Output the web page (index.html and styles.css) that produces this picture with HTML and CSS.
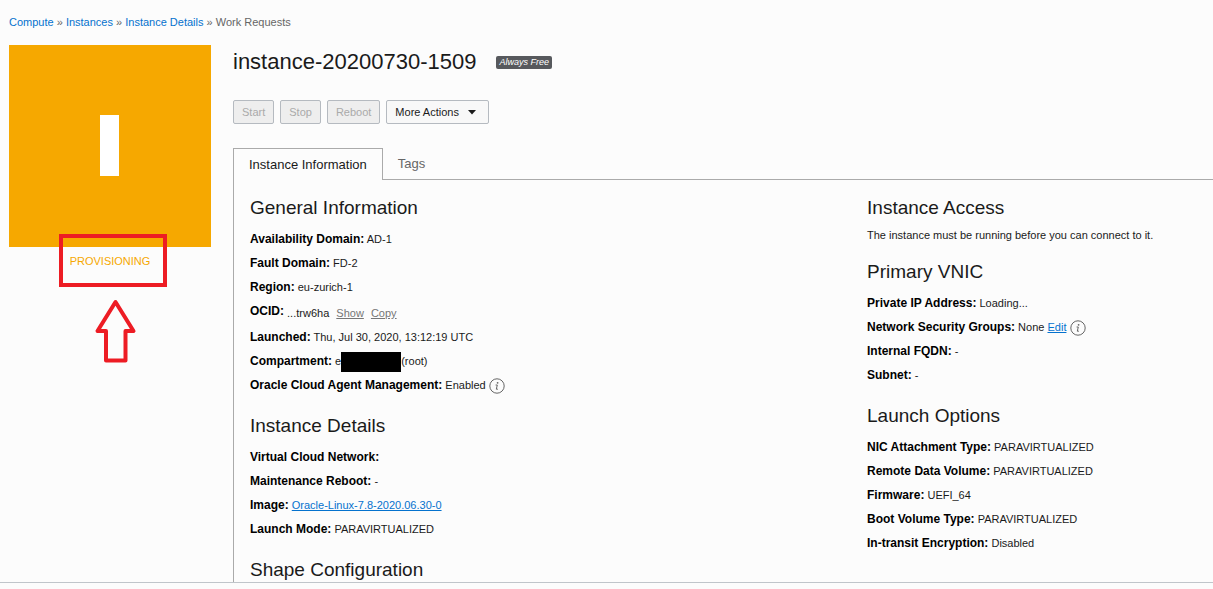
FILE: index.html
```html
<!DOCTYPE html>
<html lang="en">
<head>
<meta charset="utf-8">
<meta name="viewport" content="width=device-width, initial-scale=1">
<title>Instance Details</title>
<link rel="stylesheet" href="styles.css">
</head>
<body>
<div class="page">
  <nav class="breadcrumb" aria-label="Breadcrumb"><a href="#">Compute</a> » <a href="#">Instances</a> » <a href="#">Instance Details</a> » <span>Work Requests</span></nav>
  <div class="layout">
    <aside class="side">
      <div class="tile"><span class="tile-letter"></span></div>
      <div class="status">PROVISIONING</div>
      <div class="mark-box"></div>
      <svg class="mark-arrow" viewBox="0 0 44 66" aria-hidden="true"><path d="M21.500 4 L39.500 33 H31.500 V62.500 H12 V33 H3.500 Z" fill="none" stroke="#ed1c24" stroke-width="4" stroke-linejoin="round"/></svg>
    </aside>
    <main class="main">
      <header class="title-row">
        <h1 class="title">instance-20200730-1509</h1>
        <span class="badge">Always Free</span>
      </header>
      <div class="actions">
        <button class="btn" type="button" disabled>Start</button>
        <button class="btn" type="button" disabled>Stop</button>
        <button class="btn" type="button" disabled>Reboot</button>
        <button class="btn btn-menu" type="button">More Actions <svg class="caret" viewBox="0 0 8 5" aria-hidden="true"><path d="M0 0H8L4 4.500Z" fill="#1a1a1a"/></svg></button>
      </div>
      <div class="tabs" role="tablist">
        <button class="tab tab-active" type="button" role="tab" aria-selected="true">Instance Information</button>
        <button class="tab" type="button" role="tab" aria-selected="false">Tags</button>
      </div>
      <div class="panel" role="tabpanel">
        <div class="column">
          <section class="section">
            <h2 class="heading">General Information</h2>
            <p class="row"><strong>Availability Domain:</strong> AD-1</p>
            <p class="row"><strong>Fault Domain:</strong> FD-2</p>
            <p class="row"><strong>Region:</strong> eu-zurich-1</p>
            <p class="row row-ocid"><strong>OCID:</strong> <span class="ocid">...trw6ha <a class="muted" href="#">Show</a> <a class="muted" href="#">Copy</a></span></p>
            <p class="row"><strong>Launched:</strong> Thu, Jul 30, 2020, 13:12:19 UTC</p>
            <p class="row"><strong>Compartment:</strong> e<span class="redacted"></span>(root)</p>
            <p class="row"><strong>Oracle Cloud Agent Management:</strong> Enabled <svg class="info" viewBox="0 0 16 16" aria-hidden="true"><circle cx="8" cy="8" r="7.200"/><path d="M6.600 7H8.300L7.300 11.200H8.900"/><circle class="dot" cx="8.600" cy="4.800" r=".9"/></svg></p>
          </section>
          <section class="section">
            <h2 class="heading">Instance Details</h2>
            <p class="row"><strong>Virtual Cloud Network:</strong></p>
            <p class="row"><strong>Maintenance Reboot:</strong> -</p>
            <p class="row"><strong>Image:</strong> <a class="link" href="#">Oracle-Linux-7.8-2020.06.30-0</a></p>
            <p class="row"><strong>Launch Mode:</strong> PARAVIRTUALIZED</p>
          </section>
          <section class="section">
            <h2 class="heading">Shape Configuration</h2>
          </section>
        </div>
        <div class="column">
          <section class="section">
            <h2 class="heading">Instance Access</h2>
            <p class="note">The instance must be running before you can connect to it.</p>
          </section>
          <section class="section">
            <h2 class="heading">Primary VNIC</h2>
            <p class="row"><strong>Private IP Address:</strong> Loading...</p>
            <p class="row"><strong>Network Security Groups:</strong> None <a class="link" href="#">Edit</a> <svg class="info" viewBox="0 0 16 16" aria-hidden="true"><circle cx="8" cy="8" r="7.200"/><path d="M6.600 7H8.300L7.300 11.200H8.900"/><circle class="dot" cx="8.600" cy="4.800" r=".9"/></svg></p>
            <p class="row"><strong>Internal FQDN:</strong> -</p>
            <p class="row"><strong>Subnet:</strong> -</p>
          </section>
          <section class="section">
            <h2 class="heading">Launch Options</h2>
            <p class="row"><strong>NIC Attachment Type:</strong> PARAVIRTUALIZED</p>
            <p class="row"><strong>Remote Data Volume:</strong> PARAVIRTUALIZED</p>
            <p class="row"><strong>Firmware:</strong> UEFI_64</p>
            <p class="row"><strong>Boot Volume Type:</strong> PARAVIRTUALIZED</p>
            <p class="row"><strong>In-transit Encryption:</strong> Disabled</p>
          </section>
        </div>
      </div>
    </main>
  </div>
</div>
<footer class="footer"></footer>
</body>
</html>
```

FILE: styles.css
```css
* { box-sizing: border-box; }

body {
  margin: 0;
  height: 100vh;
  display: flex;
  flex-direction: column;
  background: #fcfcfc;
  color: #1a1a1a;
  font: 11px/24px "Liberation Sans", Arial, sans-serif;
}

h1, h2, p { margin: 0; font-weight: normal; }
a { color: #0572ce; }
button { font: inherit; }

.page {
  flex: 1;
  min-height: 0;
  overflow: hidden;
  display: flex;
  flex-direction: column;
}

.breadcrumb {
  padding: 10px 9px 11px;
  color: #666;
}
.breadcrumb a { text-decoration: none; }

.layout {
  flex: 1;
  display: flex;
  gap: 22px;
  padding-left: 9px;
}

.side {
  position: relative;
  flex: 0 0 202px;
}
.tile {
  display: flex;
  align-items: center;
  justify-content: center;
  aspect-ratio: 1;
  padding: 0 2px 2px 0;
  background: #f6a800;
}
.tile-letter {
  width: 19px;
  height: 61px;
  background: #fff;
}
.status {
  padding-top: 2px;
  text-align: center;
  color: #f6a800;
}
.mark-box {
  position: absolute;
  left: 50px;
  top: 189px;
  width: 108px;
  height: 53px;
  border: 4px solid #ed1c24;
}
.mark-arrow {
  position: absolute;
  left: 85px;
  top: 253px;
  width: 44px;
  height: 66px;
}

.main {
  flex: 1;
  min-width: 0;
  display: flex;
  flex-direction: column;
}

.title-row {
  display: flex;
  align-items: center;
  gap: 20px;
  height: 34px;
}
.title { font-size: 22px; }
.badge {
  padding: 0 3px;
  border-radius: 2px;
  background: #57595d;
  color: #fff;
  font-size: 9px;
  font-style: italic;
  line-height: 13px;
}

.actions {
  display: flex;
  gap: 6px;
  margin: 21px 0 24px;
}
.btn {
  height: 24px;
  padding: 0 8px;
  border: 1px solid #b5bac0;
  border-radius: 2px;
  background: #eee;
  color: #aaa;
  line-height: 22px;
}
.btn-menu {
  background: #f8f8f8;
  color: #1a1a1a;
  padding-right: 12px;
}
.caret {
  width: 8px;
  height: 5px;
  margin-left: 6px;
  vertical-align: 1px;
}

.tabs {
  display: flex;
  height: 32px;
  border-bottom: 1px solid #aaa;
}
.tab {
  height: 31px;
  padding: 0 15px;
  border: 0;
  background: none;
  color: #666;
  font-size: 13px;
}
.tab-active {
  height: 32px;
  border: 1px solid #aaa;
  border-bottom: 0;
  background: #fcfcfc;
  color: #1a1a1a;
}

.panel {
  flex: 1;
  display: grid;
  grid-template-columns: 64fr 36fr;
  column-gap: 2px;
  padding: 16px 0 0 16px;
  border-left: 1px solid #aaa;
}
.column {
  display: flex;
  flex-direction: column;
  gap: 17px;
}
.heading {
  margin-bottom: 7px;
  font-size: 19px;
}
.row { height: 24px; }
.row-ocid { height: 26px; }
.row strong { font-size: 12px; color: #000; }
.note { line-height: 16px; }
.ocid { vertical-align: -2px; }
.muted { margin-left: 4px; color: #767676; }
.redacted {
  display: inline-block;
  width: 60px;
  height: 20px;
  background: #000;
  vertical-align: middle;
}
.info {
  width: 16px;
  height: 16px;
  fill: none;
  stroke: #666;
  vertical-align: middle;
}
.info .dot { fill: #666; stroke: none; }

.footer {
  flex: 0 0 7px;
  border-top: 1px solid #c0c5ca;
}
```
